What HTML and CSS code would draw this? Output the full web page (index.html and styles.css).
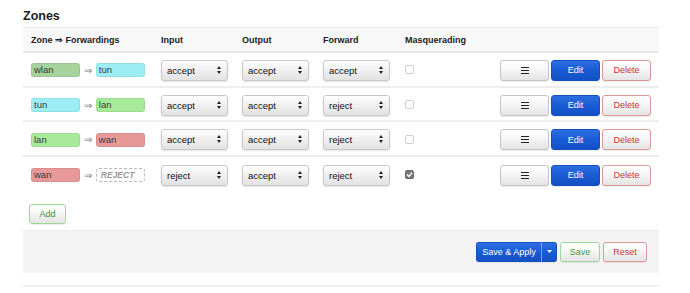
FILE: index.html
```html
<!DOCTYPE html>
<html lang="en">
<head>
  <meta charset="UTF-8" />
  <meta name="viewport" content="width=device-width, initial-scale=1.0" />
  <title>Firewall - Zones</title>
  <link rel="stylesheet" href="styles.css">
</head>
<body>
  <div class="page">
    <h3 class="title">Zones</h3>

    <div class="zones">
      <!-- header -->
      <div class="row head">
        <div class="cell">Zone &rArr; Forwardings</div>
        <div class="cell">Input</div>
        <div class="cell">Output</div>
        <div class="cell">Forward</div>
        <div class="cell">Masquerading</div>
        <div class="cell"></div>
      </div>

      <div class="row">
        <div class="cell fwd">
          <span class="badge z-wlan">wlan</span><span class="arrow">&rArr;</span><span class="badge z-tun">tun</span>
        </div>
        <div class="cell"><span class="select"><select><option>accept</option></select></span></div>
        <div class="cell"><span class="select"><select><option>accept</option></select></span></div>
        <div class="cell"><span class="select"><select><option>accept</option></select></span></div>
        <div class="cell"><span class="check"></span></div>
        <div class="cell btns">
          <button class="btn btn-menu"><svg width="8" height="7" viewBox="0 0 8 7"><path d="M0 .5h8M0 3.5h8M0 6.5h8" stroke="#222" stroke-width="1.2"/></svg></button>
          <button class="btn btn-blue">Edit</button>
          <button class="btn btn-red">Delete</button>
        </div>
      </div>

      <div class="row">
        <div class="cell fwd">
          <span class="badge z-tun">tun</span><span class="arrow">&rArr;</span><span class="badge z-lan">lan</span>
        </div>
        <div class="cell"><span class="select"><select><option>accept</option></select></span></div>
        <div class="cell"><span class="select"><select><option>accept</option></select></span></div>
        <div class="cell"><span class="select"><select><option>reject</option></select></span></div>
        <div class="cell"><span class="check"></span></div>
        <div class="cell btns">
          <button class="btn btn-menu"><svg width="8" height="7" viewBox="0 0 8 7"><path d="M0 .5h8M0 3.5h8M0 6.5h8" stroke="#222" stroke-width="1.2"/></svg></button>
          <button class="btn btn-blue">Edit</button>
          <button class="btn btn-red">Delete</button>
        </div>
      </div>

      <div class="row">
        <div class="cell fwd">
          <span class="badge z-lan">lan</span><span class="arrow">&rArr;</span><span class="badge z-wan">wan</span>
        </div>
        <div class="cell"><span class="select"><select><option>accept</option></select></span></div>
        <div class="cell"><span class="select"><select><option>accept</option></select></span></div>
        <div class="cell"><span class="select"><select><option>reject</option></select></span></div>
        <div class="cell"><span class="check"></span></div>
        <div class="cell btns">
          <button class="btn btn-menu"><svg width="8" height="7" viewBox="0 0 8 7"><path d="M0 .5h8M0 3.5h8M0 6.5h8" stroke="#222" stroke-width="1.2"/></svg></button>
          <button class="btn btn-blue">Edit</button>
          <button class="btn btn-red">Delete</button>
        </div>
      </div>

      <div class="row">
        <div class="cell fwd">
          <span class="badge z-wan">wan</span><span class="arrow">&rArr;</span><span class="badge empty">REJECT</span>
        </div>
        <div class="cell"><span class="select"><select><option>reject</option></select></span></div>
        <div class="cell"><span class="select"><select><option>accept</option></select></span></div>
        <div class="cell"><span class="select"><select><option>reject</option></select></span></div>
        <div class="cell"><span class="check checked"><svg width="9" height="9" viewBox="0 0 9 9"><path d="M2 4.6l1.8 1.8L7.2 2.6" fill="none" stroke="#fff" stroke-width="1.4"/></svg></span></div>
        <div class="cell btns">
          <button class="btn btn-menu"><svg width="8" height="7" viewBox="0 0 8 7"><path d="M0 .5h8M0 3.5h8M0 6.5h8" stroke="#222" stroke-width="1.2"/></svg></button>
          <button class="btn btn-blue">Edit</button>
          <button class="btn btn-red">Delete</button>
        </div>
      </div>
    </div>

    <div class="add-row">
      <button class="btn btn-green btn-add">Add</button>
    </div>

    <div class="actions">
      <div class="split">
        <button class="btn btn-blue btn-apply">Save &amp; Apply</button>
        <button class="btn btn-blue btn-caret"><svg width="5" height="3" viewBox="0 0 5 3"><path d="M0 0h5L2.5 3z" fill="#fff"/></svg></button>
      </div>
      <button class="btn btn-green">Save</button>
      <button class="btn btn-red btn-reset">Reset</button>
    </div>

    <div class="rule"></div>
  </div>
</body>
</html>
```

FILE: styles.css
```css
* { margin: 0; padding: 0; box-sizing: border-box; }
html, body {
  background: #fff;
  font-family: "Liberation Sans", Arial, sans-serif;
  color: #333;
}

.page {
  width: 659px;
  padding-left: 23px;
}

.title {
  font-size: 12.5px;
  font-weight: bold;
  color: #222;
  line-height: 15px;
  padding-top: 9px;
  margin-bottom: 3px;
}

/* zone table */
.zones {
  border-top: 1px solid #e6e6e6;
}
.row {
  display: grid;
  grid-template-columns: 130px 81px 81px 82px 1fr auto;
  align-items: center;
  height: 34.7px;
  border-bottom: 2px solid #eee;
}
.row:last-child { border-bottom: none; }
.row.head {
  height: 25px;
  background: #f8f8f8;
  border-bottom: 2px solid #e8e8e8;
  font-size: 9px;
  font-weight: bold;
  color: #222;
}
.cell {
  padding: 0 8px;
  display: flex;
  align-items: center;
}
.row:not(.head) .cell { padding-top: 2px; }

/* forwardings */
.badge {
  display: inline-block;
  width: 50px;
  height: 14px;
  line-height: 12px;
  padding-left: 2px;
  font-size: 9.5px;
  color: #3a3a3a;
  border: 1px solid rgba(0,0,0,0.06);
  border-radius: 3px;
}
.z-wlan { background: #a6d39b; }
.z-tun  { background: #9ceef4; }
.z-lan  { background: #a6ea9a; }
.z-wan  { background: #e89898; }
.badge.empty {
  border: 1px dashed #bbb;
  color: #999;
  font-style: italic;
  font-weight: bold;
  font-size: 8.5px;
  padding-left: 4px;
}
.arrow {
  width: 16px;
  text-align: center;
  font-size: 10px;
  color: #777;
}

/* selects */
.select {
  position: relative;
  display: inline-block;
}
.select select {
  appearance: none;
  -webkit-appearance: none;
  width: 67px;
  height: 21px;
  padding: 0 0 0 5px;
  font-family: inherit;
  font-size: 9.5px;
  color: #111;
  background: linear-gradient(#fff, #f2f2f2 40%, #e2e2e2);
  border: 1px solid #c8c8c8;
  border-radius: 3px;
  box-shadow: 0 1px 2px rgba(0,0,0,0.12);
}
.select::before,
.select::after {
  content: "";
  position: absolute;
  right: 7px;
  border-left: 2.5px solid transparent;
  border-right: 2.5px solid transparent;
}
.select::before { top: 6px; border-bottom: 3px solid #222; }
.select::after  { top: 11px; border-top: 3px solid #222; }

/* checkbox */
.check {
  width: 9px;
  height: 9px;
  border: 1px solid #cfcfcf;
  border-radius: 2px;
  background: #fff;
  margin-top: -1px;
  display: flex;
}
.check.checked {
  background: #7a7a7a;
  border-color: #6a6a6a;
}
.check svg { margin: -1px; }

/* buttons */
.btns {
  justify-content: flex-end;
  gap: 2px;
}
.btn {
  height: 21px;
  width: 49px;
  font-family: inherit;
  font-size: 9px;
  color: #333;
  background: linear-gradient(#fff, #fafafa 30%, #e4e4e4);
  border: 1px solid #c4c4c4;
  border-radius: 3px;
  box-shadow: 0 1px 1px rgba(0,0,0,0.08);
  display: inline-flex;
  align-items: center;
  justify-content: center;
}
.btn-blue {
  color: #fff;
  background: linear-gradient(#2d6fe0, #1a5bd6 50%, #1450c4);
  border-color: #1450c0;
}
.btn-red {
  color: #c0393b;
  border-color: #dd9797;
}
.btn-green {
  color: #3f9a3f;
  border-color: #9fd49a;
}

.add-row {
  padding: 11px 6px 6px;
}
.btn-add {
  width: 37px;
  height: 20px;
  color: #3a8f3a;
}

/* footer */
.actions {
  background: #f4f4f4;
  border-top: 1px solid #ebebeb;
  height: 43px;
  padding-right: 12px;
  display: flex;
  align-items: center;
  justify-content: flex-end;
  gap: 3px;
}
.split { display: flex; }
.btn-apply {
  width: 66px;
  border-radius: 3px 0 0 3px;
  border-right-color: #7ea4e8;
}
.btn-caret {
  width: 15px;
  border-radius: 0 3px 3px 0;
  border-left: none;
}
.actions .btn { height: 20px; }
.actions .btn-green { width: 40px; }
.btn-reset { width: 44px; }

.rule {
  margin-top: 12px;
  border-top: 2px solid #f0f0f0;
}
```
